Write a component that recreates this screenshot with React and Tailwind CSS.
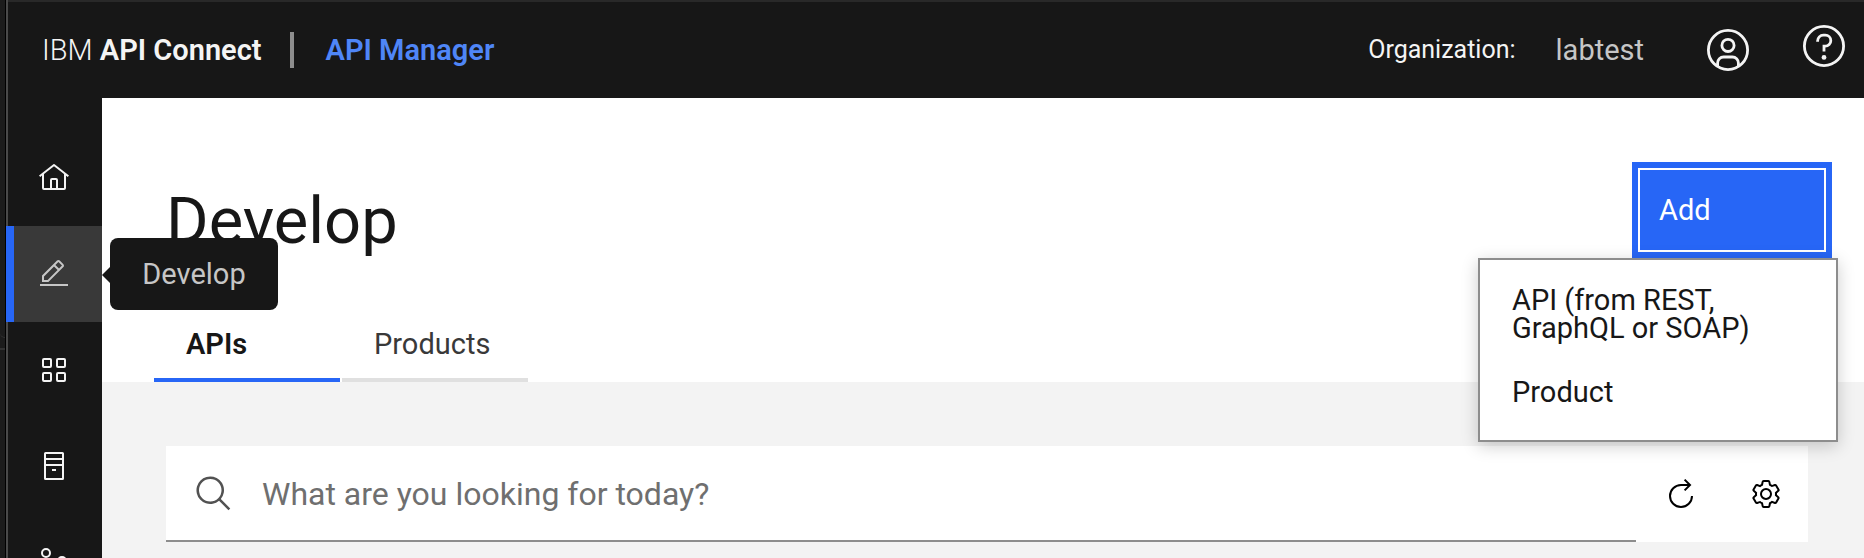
import React from "react";

const HomeIcon = () => (
  <svg viewBox="0 0 32 32" className="size-8" fill="currentColor" aria-hidden="true">
    <path d="M16.6123 2.2138a1.01 1.01 0 0 0-1.2427 0L1 13.4194l1.2427 1.5717L4 13.6208V26a2.0041 2.0041 0 0 0 2 2H26a2.0037 2.0037 0 0 0 2-2V13.63L29.7573 15 31 13.4282ZM18 26H14V18h4Zm2 0V18a2.0023 2.0023 0 0 0-2-2H14a2.002 2.002 0 0 0-2 2v8H6V12.0615l10-7.79 10 7.8V26Z" />
  </svg>
);

const EditIcon = () => (
  <svg viewBox="0 0 32 32" className="size-8" fill="currentColor" aria-hidden="true">
    <path d="M2 26h28v2H2zM25.4 9c.8-.8.8-2 0-2.8l-3.6-3.6c-.8-.8-2-.8-2.8 0l-15 15V24h6.4l15-15zm-5-5L24 7.6l-3 3L17.4 7l3-3zM6 22v-3.6l10-10 3.6 3.6-10 10H6z" />
  </svg>
);

const GridIcon = () => (
  <svg viewBox="0 0 32 32" className="size-8" fill="none" stroke="currentColor" strokeWidth="2" aria-hidden="true">
    <rect x="5" y="5" width="8" height="8" rx="1" />
    <rect x="19" y="5" width="8" height="8" rx="1" />
    <rect x="5" y="19" width="8" height="8" rx="1" />
    <rect x="19" y="19" width="8" height="8" rx="1" />
  </svg>
);

const CatalogIcon = () => (
  <svg viewBox="0 0 32 32" className="size-8" fill="none" stroke="currentColor" strokeWidth="2" aria-hidden="true">
    <rect x="7" y="3" width="18" height="26" rx="0.5" />
    <path d="M7 9h18M7 15h18M14 20h4" />
  </svg>
);

const MembersIcon = () => (
  <svg viewBox="0 0 32 32" className="size-8" fill="none" stroke="currentColor" strokeWidth="2" aria-hidden="true">
    <circle cx="8" cy="7" r="4" />
    <circle cx="24" cy="15" r="4" />
    <circle cx="10" cy="25" r="4" />
  </svg>
);

const UserIcon = () => (
  <svg viewBox="0 0 48 48" className="size-12" fill="none" stroke="currentColor" strokeWidth="2.8" aria-hidden="true">
    <circle cx="24" cy="24" r="19.6" />
    <circle cx="24" cy="19.4" r="6.1" />
    <path d="M13.6 40v-3a6 6 0 0 1 6-6h8.8a6 6 0 0 1 6 6v3" />
  </svg>
);

const HelpIcon = () => (
  <svg viewBox="0 0 48 48" className="size-12" fill="none" stroke="currentColor" strokeWidth="2.8" aria-hidden="true">
    <circle cx="24" cy="24" r="19.6" />
    <path d="M17.6 19.8v-.9a5.7 5.7 0 0 1 5.7-5.7h2a5.5 5.5 0 0 1 0 11H24v5.2" />
    <circle cx="24" cy="35.4" r="2.4" fill="currentColor" stroke="none" />
  </svg>
);

const SearchIcon = () => (
  <svg viewBox="0 0 32 32" className="size-10 shrink-0 text-[#525252]" fill="currentColor" aria-hidden="true">
    <path d="M29,27.5859l-7.5521-7.5521a11.0177,11.0177,0,1,0-1.4141,1.4141L27.5859,29ZM4,13a9,9,0,1,1,9,9A9.01,9.01,0,0,1,4,13Z" />
  </svg>
);

const RefreshIcon = () => (
  <svg viewBox="0 0 32 32" className="size-8" fill="none" stroke="currentColor" strokeWidth="2" aria-hidden="true">
    <path d="M27 18A11 11 0 1 1 16 7h8.6M19.6 1.6 25 7l-5.4 5.4" />
  </svg>
);

const SettingsIcon = () => (
  <svg viewBox="0 0 32 32" className="size-8" fill="currentColor" aria-hidden="true">
    <path d="M27,16.76c0-.25,0-.5,0-.76s0-.51,0-.77l1.92-1.68A2,2,0,0,0,29.3,11L26.94,7a2,2,0,0,0-1.73-1,2,2,0,0,0-.64.1l-2.43.82a11.35,11.35,0,0,0-1.31-.75l-.51-2.52a2,2,0,0,0-2-1.61H13.64a2,2,0,0,0-2,1.61l-.51,2.52a11.48,11.48,0,0,0-1.32.75L7.43,6.06A2,2,0,0,0,6.79,6,2,2,0,0,0,5.06,7L2.7,11a2,2,0,0,0,.41,2.51L5,15.24c0,.25,0,.5,0,.76s0,.51,0,.77L3.11,18.45A2,2,0,0,0,2.7,21L5.06,25a2,2,0,0,0,1.73,1,2,2,0,0,0,.64-.1l2.43-.82a11.35,11.35,0,0,0,1.31.75l.51,2.52a2,2,0,0,0,2,1.61h4.72a2,2,0,0,0,2-1.61l.51-2.52a11.48,11.48,0,0,0,1.32-.75l2.42.82a2,2,0,0,0,.64.1,2,2,0,0,0,1.73-1L29.3,21a2,2,0,0,0-.41-2.51ZM25.21,24l-3.43-1.16a8.86,8.86,0,0,1-2.71,1.57L18.36,28H13.64l-.71-3.55a9.36,9.36,0,0,1-2.7-1.57L6.79,24,4.43,20l2.72-2.4a8.9,8.9,0,0,1,0-3.13L4.43,12,6.79,8l3.43,1.16a8.86,8.86,0,0,1,2.71-1.57L13.64,4h4.72l.71,3.55a9.36,9.36,0,0,1,2.7,1.57L25.21,8,27.57,12l-2.72,2.4a8.9,8.9,0,0,1,0,3.13L27.57,20Z" />
    <path d="M16,22a6,6,0,1,1,6-6A5.94,5.94,0,0,1,16,22Zm0-10a3.91,3.91,0,0,0-4,4,3.91,3.91,0,0,0,4,4,3.91,3.91,0,0,0,4-4A3.91,3.91,0,0,0,16,12Z" />
  </svg>
);

const NAV = [
  { label: "Home", Icon: HomeIcon },
  { label: "Develop", Icon: EditIcon, active: true },
  { label: "Manage", Icon: GridIcon },
  { label: "Resources", Icon: CatalogIcon },
  { label: "Members", Icon: MembersIcon },
];

function Header() {
  return (
    <header className="flex h-[98px] items-center border-t-2 border-[#292929] bg-[#171717] pl-[34px] pr-4 text-[29px] leading-9 text-[#f4f4f4]">
      <a href="#" className="whitespace-nowrap">
        <span className="font-light">IBM</span> <span className="font-semibold">API Connect</span>
      </a>
      <span className="ml-7 h-9 w-1 bg-[#8d8d8d]" />
      <a href="#" className="ml-8 whitespace-nowrap font-semibold text-[#4f86f7]">API Manager</a>
      <div className="ml-auto flex items-center">
        <span className="text-[25px]">Organization:</span>
        <button type="button" className="ml-10 text-[#c6c6c6]">labtest</button>
        <button type="button" aria-label="Account" className="ml-[60px]"><UserIcon /></button>
        <button type="button" aria-label="Help" className="ml-12 pb-2"><HelpIcon /></button>
      </div>
    </header>
  );
}

function SideNav() {
  return (
    <nav className="h-[460px] w-[94px] shrink-0 bg-[#171717] pt-8">
      {NAV.map(({ label, Icon, active }) =>
        active ? (
          <a key={label} href="#" aria-label={label} className="relative -ml-0.5 flex h-24 items-center justify-center border-l-8 border-[#2766f6] bg-[#393939] pr-2 text-[#c6c6c6]">
            <Icon />
            <span role="tooltip" className="absolute left-full top-3 z-20 ml-2 flex h-[72px] w-[168px] items-center justify-center rounded-lg bg-[#171717] pt-0.5 text-[29px]">
              <svg viewBox="0 0 8 16" className="absolute right-full h-4 w-2" fill="#171717" aria-hidden="true">
                <path d="M8 0v16L0 8z" />
              </svg>
              {label}
            </span>
          </a>
        ) : (
          <a key={label} href="#" aria-label={label} className="flex h-24 items-center justify-center pr-0.5 text-[#f4f4f4]">
            <Icon />
          </a>
        )
      )}
    </nav>
  );
}

function AddMenu() {
  return (
    <div className="relative">
      <button type="button" aria-expanded="true" className="block h-24 w-[200px] bg-[#2766f6] p-1.5 text-white">
        <span className="flex h-full items-center border-2 border-white pl-[19px]">Add</span>
      </button>
      <div role="menu" className="absolute -right-1.5 top-full z-10 flex w-[360px] flex-col gap-9 border-2 border-[#8d8d8d] bg-white pb-[34px] pl-8 pr-16 pt-[26px] leading-7 text-[#171717] shadow-[0_4px_16px_rgba(0,0,0,0.2)]">
        <button type="button" role="menuitem" className="text-left">API (from REST, GraphQL or SOAP)</button>
        <button type="button" role="menuitem" className="text-left">Product</button>
      </div>
    </div>
  );
}

function Main() {
  return (
    <main className="min-w-0 flex-1 bg-[#f3f3f3] text-[29px] leading-9">
      <section className="bg-white pt-16">
        <div className="flex items-start justify-between pl-16 pr-8">
          <h1 className="pt-5 text-[65px] leading-[78px] text-[#171717]">Develop</h1>
          <AddMenu />
        </div>
        <div role="tablist" className="flex gap-0.5 pl-[52px] pt-[46px]">
          <button type="button" role="tab" aria-selected="true" className="h-[76px] w-[186px] border-b-4 border-[#2766f6] pl-8 pt-1 text-left font-semibold text-[#171717]">APIs</button>
          <button type="button" role="tab" aria-selected="false" className="h-[76px] w-[186px] border-b-4 border-[#e0e0e0] pl-8 pt-1 text-left text-[#393939]">Products</button>
        </div>
      </section>
      <section className="pl-16 pr-14 pt-16">
        <div className="flex h-24 bg-white">
          <label className="flex flex-1 items-center gap-7 border-b-2 border-[#8d8d8d] pl-7 pt-0.5">
            <SearchIcon />
            <input type="search" aria-label="Search" placeholder="What are you looking for today?" className="min-w-0 flex-1 bg-transparent text-[32px] leading-10 outline-none placeholder:text-[#6f6f6f]" />
          </label>
          <div className="flex w-[172px] pl-0.5">
            <button type="button" aria-label="Refresh" className="flex flex-1 items-center justify-center"><RefreshIcon /></button>
            <button type="button" aria-label="Settings" className="flex flex-1 items-center justify-center"><SettingsIcon /></button>
          </div>
        </div>
      </section>
    </main>
  );
}

export default function App() {
  return (
    <div className="flex h-screen overflow-hidden bg-[#f3f3f3] font-['Roboto',sans-serif]">
      <div className="w-1.5 shrink-0 border-r border-black bg-[#1c1c1c]">
        <div className="h-[338px] rounded-bl-2xl border-b border-[#333333]" />
        <div className="h-3 border-b-2 border-[#333333]" />
      </div>
      <div className="w-0.5 shrink-0 bg-[#4a4a4a]" />
      <div className="flex min-w-0 flex-1 flex-col">
        <Header />
        <div className="flex flex-1">
          <SideNav />
          <Main />
        </div>
      </div>
    </div>
  );
}
